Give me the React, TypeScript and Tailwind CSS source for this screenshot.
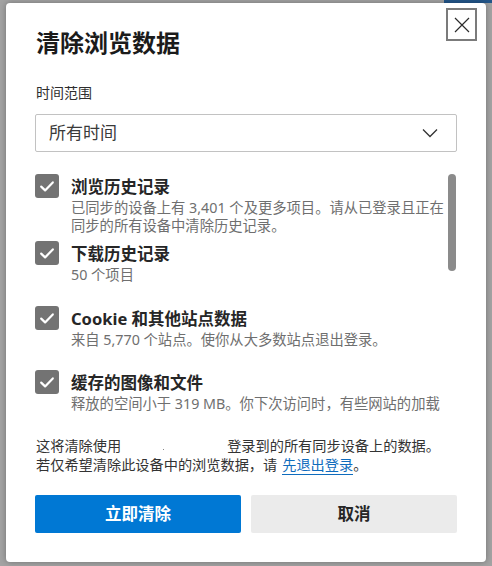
import React from "react";

function Check() {
  return (
    <div className="w-[24px] h-[24px] rounded-[3px] bg-[#737373] flex items-center justify-center shrink-0">
      <svg width="24" height="24" viewBox="0 0 24 24" fill="none">
        <path d="M6.2 12.6 L10.1 16.4 L17.8 8.4" stroke="#ffffff" strokeWidth="2.2" strokeLinecap="round" strokeLinejoin="round" />
      </svg>
    </div>
  );
}

function Item({ title, children, cls }: { title: string; children: React.ReactNode; cls: string }) {
  return (
    <div className={"flex gap-[12px] " + cls}>
      <Check />
      <div className="flex flex-col whitespace-nowrap">
        <div className="mt-[1px] text-[16.5px] leading-[24px] font-bold text-[#262626]">{title}</div>
        <div className="text-[14.3px] leading-[18px] text-[#6f6f6f]">{children}</div>
      </div>
    </div>
  );
}

export default function App() {
  return (
    <div className="w-[492px] h-[566px] bg-[#a3a3a3] relative overflow-hidden pt-[3px] pl-[6px] font-['Noto_Sans','Noto_Sans_CJK_SC',sans-serif]">
      <div className="absolute top-0 right-0 w-[48px] h-[3px] bg-[#23568a]" />
      <div className="relative w-[480px] h-[559px] bg-white rounded-[4px] shadow-[0_0_6px_rgba(0,0,0,0.3)] px-[29px] pt-[24px] flex flex-col">
        <button className="absolute top-[5px] right-[9px] w-[31px] h-[33px] border-2 border-[#7b7b7b] flex items-center justify-center bg-white">
          <svg width="16" height="16" viewBox="0 0 16 16" fill="none">
            <path d="M1 1 L15 15 M15 1 L1 15" stroke="#2b2b2b" strokeWidth="1.2" />
          </svg>
        </button>

        <div className="text-[24px] leading-[32px] font-bold text-[#1b1b1b] pl-[1px]">清除浏览数据</div>

        <div className="mt-[24px] text-[14px] leading-[20px] text-[#2e2e2e] pl-[1px]">时间范围</div>

        <div className="mt-[11px] h-[38px] border border-[#c2c2c2] rounded-[2px] flex items-center justify-between pl-[13px] pr-[18px]">
          <span className="text-[17px] leading-[24px] text-[#3a3a3a]">所有时间</span>
          <svg width="16" height="10" viewBox="0 0 16 10" fill="none">
            <path d="M1 1.5 L8 8.5 L15 1.5" stroke="#333333" strokeWidth="1.3" />
          </svg>
        </div>

        <div className="relative mt-[22px] h-[240px] overflow-hidden">
          <div className="absolute right-[1px] top-0 w-[8px] h-[97px] rounded-full bg-[#8b8b8b]" />
          <div className="flex flex-col pr-[16px]">
            <Item title="浏览历史记录" cls="h-[67px]">
              已同步的设备上有 3,401 个及更多项目。请从已登录且正在
              <br />
              同步的所有设备中清除历史记录。
            </Item>
            <Item title="下载历史记录" cls="h-[65px]">
              50 个项目
            </Item>
            <Item title="Cookie 和其他站点数据" cls="h-[64px]">
              来自 5,770 个站点。使你从大多数站点退出登录。
            </Item>
            <Item title="缓存的图像和文件" cls="h-[64px]">
              释放的空间小于 319 MB。你下次访问时，有些网站的加载
            </Item>
          </div>
        </div>

        <div className="mt-[22px] text-[14.2px] leading-[19px] text-[#333333] whitespace-nowrap pl-[1px]">
          <div>
            这将清除使用
            <span className="relative inline-block w-[106px] h-[10px]">
              <span className="absolute left-[42px] top-[8px] w-[1px] h-[1px] bg-[#888888]" />
            </span>
            登录到的所有同步设备上的数据。
          </div>
          <div>
            若仅希望清除此设备中的浏览数据，请
            <span className="ml-[5px] text-[#0f6cbd] border-b border-[#0f6cbd]">先退出登录</span>。
          </div>
        </div>

        <div className="mt-[21px] flex gap-[10px]">
          <button className="flex-1 h-[38px] rounded-[2px] bg-[#0078d4] text-white text-[16.5px] font-bold flex items-center justify-center">
            立即清除
          </button>
          <button className="flex-1 h-[38px] rounded-[2px] bg-[#ebebeb] text-[#262626] text-[16.5px] font-bold flex items-center justify-center">
            取消
          </button>
        </div>
      </div>
    </div>
  );
}
